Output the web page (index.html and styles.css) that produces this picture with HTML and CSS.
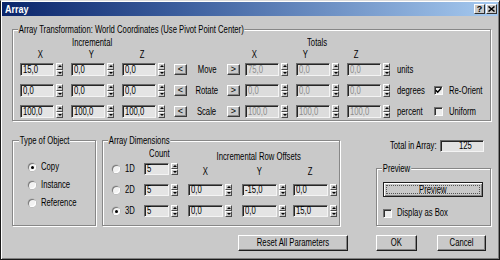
FILE: index.html
```html
<!DOCTYPE html>
<html>
<head>
<meta charset="utf-8">
<title>Array</title>
<link rel="stylesheet" href="styles.css">
</head>
<body>
<div class="window">
  <div class="titlebar">
    <span class="title"><span class="tx">Array</span></span>
    <div class="tbtns">
      <span class="tbtn">?</span>
      <span class="tbtn"><svg width="7" height="6" viewBox="0 0 7 6"><path d="M0.5 0.5 L6.5 5.5 M6.5 0.5 L0.5 5.5" stroke="#000" stroke-width="1.5" fill="none"/></svg></span>
    </div>
  </div>
  <div class="client">
    <div class="group g-transform">
      <span class="legend"><span class="tx">Array Transformation: World Coordinates (Use Pivot Point Center)</span></span>
      <div class="trow hdr1"><span class="inc"><span class="tx c">Incremental</span></span><span class="tot"><span class="tx c">Totals</span></span></div>
      <div class="trow hdr2"><span class="ax"><span class="tx c">X</span></span><span class="ax"><span class="tx c">Y</span></span><span class="ax"><span class="tx c">Z</span></span><span class="ax t1"><span class="tx c">X</span></span><span class="ax"><span class="tx c">Y</span></span><span class="ax"><span class="tx c">Z</span></span></div>

      <div class="trow data">
        <div class="spin"><span class="field"><span class="tx">15,0</span></span><span class="spinner"><i class="up"></i><i class="dn"></i></span></div>
        <div class="spin"><span class="field"><span class="tx">0,0</span></span><span class="spinner"><i class="up"></i><i class="dn"></i></span></div>
        <div class="spin lastinc"><span class="field"><span class="tx">0,0</span></span><span class="spinner"><i class="up"></i><i class="dn"></i></span></div>
        <span class="arr">&lt;</span><span class="op"><span class="tx c">Move</span></span><span class="arr r">&gt;</span>
        <div class="spin"><span class="field dis"><span class="tx">75,0</span></span><span class="spinner"><i class="up"></i><i class="dn"></i></span></div>
        <div class="spin"><span class="field dis"><span class="tx">0,0</span></span><span class="spinner"><i class="up"></i><i class="dn"></i></span></div>
        <div class="spin lasttot"><span class="field dis"><span class="tx">0,0</span></span><span class="spinner"><i class="up"></i><i class="dn"></i></span></div>
        <span class="unit"><span class="tx">units</span></span>
      </div>

      <div class="trow data">
        <div class="spin"><span class="field"><span class="tx">0,0</span></span><span class="spinner"><i class="up"></i><i class="dn"></i></span></div>
        <div class="spin"><span class="field"><span class="tx">0,0</span></span><span class="spinner"><i class="up"></i><i class="dn"></i></span></div>
        <div class="spin lastinc"><span class="field"><span class="tx">0,0</span></span><span class="spinner"><i class="up"></i><i class="dn"></i></span></div>
        <span class="arr">&lt;</span><span class="op"><span class="tx c">Rotate</span></span><span class="arr r">&gt;</span>
        <div class="spin"><span class="field dis"><span class="tx">0,0</span></span><span class="spinner"><i class="up"></i><i class="dn"></i></span></div>
        <div class="spin"><span class="field dis"><span class="tx">0,0</span></span><span class="spinner"><i class="up"></i><i class="dn"></i></span></div>
        <div class="spin lasttot"><span class="field dis"><span class="tx">0,0</span></span><span class="spinner"><i class="up"></i><i class="dn"></i></span></div>
        <span class="unit"><span class="tx">degrees</span></span>
        <span class="chk"><span class="cbox"><svg width="7" height="7" viewBox="0 0 7 7"><path d="M0.8 3.2 L2.7 5.2 L6.2 1.2" stroke="#000" stroke-width="1.5" fill="none"/></svg></span><span class="tx">Re-Orient</span></span>
      </div>

      <div class="trow data">
        <div class="spin"><span class="field"><span class="tx">100,0</span></span><span class="spinner"><i class="up"></i><i class="dn"></i></span></div>
        <div class="spin"><span class="field"><span class="tx">100,0</span></span><span class="spinner"><i class="up"></i><i class="dn"></i></span></div>
        <div class="spin lastinc"><span class="field"><span class="tx">100,0</span></span><span class="spinner"><i class="up"></i><i class="dn"></i></span></div>
        <span class="arr">&lt;</span><span class="op"><span class="tx c">Scale</span></span><span class="arr r">&gt;</span>
        <div class="spin"><span class="field dis"><span class="tx">100,0</span></span><span class="spinner"><i class="up"></i><i class="dn"></i></span></div>
        <div class="spin"><span class="field dis"><span class="tx">100,0</span></span><span class="spinner"><i class="up"></i><i class="dn"></i></span></div>
        <div class="spin lasttot"><span class="field dis"><span class="tx">100,0</span></span><span class="spinner"><i class="up"></i><i class="dn"></i></span></div>
        <span class="unit"><span class="tx">percent</span></span>
        <span class="chk"><span class="cbox"></span><span class="tx">Uniform</span></span>
      </div>
    </div>

    <div class="lower">
      <div class="group g-type">
        <span class="legend"><span class="tx">Type of Object</span></span>
        <div class="ropt"><span class="radio on"></span><span class="tx">Copy</span></div>
        <div class="ropt"><span class="radio"></span><span class="tx">Instance</span></div>
        <div class="ropt"><span class="radio"></span><span class="tx">Reference</span></div>
      </div>

      <div class="group g-dims">
        <span class="legend"><span class="tx">Array Dimensions</span></span>
        <div class="dhdr"><span class="count-h"><span class="tx c">Count</span></span><span class="iro"><span class="tx c">Incremental Row Offsets</span></span></div>
        <div class="drow">
          <span class="rl"><span class="radio"></span><span class="tx">1D</span></span>
          <div class="spin cnt"><span class="field"><span class="tx">5</span></span><span class="spinner"><i class="up"></i><i class="dn"></i></span></div>
          <span class="ax2 o1"><span class="tx c">X</span></span><span class="ax2 o2"><span class="tx c">Y</span></span><span class="ax2"><span class="tx c">Z</span></span>
        </div>
        <div class="drow">
          <span class="rl"><span class="radio"></span><span class="tx">2D</span></span>
          <div class="spin cnt"><span class="field"><span class="tx">5</span></span><span class="spinner"><i class="up"></i><i class="dn"></i></span></div>
          <div class="spin off o1"><span class="field"><span class="tx">0,0</span></span><span class="spinner"><i class="up"></i><i class="dn"></i></span></div>
          <div class="spin off o2"><span class="field"><span class="tx">-15,0</span></span><span class="spinner"><i class="up"></i><i class="dn"></i></span></div>
          <div class="spin off"><span class="field"><span class="tx">0,0</span></span><span class="spinner"><i class="up"></i><i class="dn"></i></span></div>
        </div>
        <div class="drow">
          <span class="rl"><span class="radio on"></span><span class="tx">3D</span></span>
          <div class="spin cnt"><span class="field"><span class="tx">5</span></span><span class="spinner"><i class="up"></i><i class="dn"></i></span></div>
          <div class="spin off o1"><span class="field"><span class="tx">0,0</span></span><span class="spinner"><i class="up"></i><i class="dn"></i></span></div>
          <div class="spin off o2"><span class="field"><span class="tx">0,0</span></span><span class="spinner"><i class="up"></i><i class="dn"></i></span></div>
          <div class="spin off"><span class="field"><span class="tx">15,0</span></span><span class="spinner"><i class="up"></i><i class="dn"></i></span></div>
        </div>
      </div>

      <div class="rightcol">
        <div class="total"><span class="tx r">Total in Array:</span><span class="field totf"><span class="tx c">125</span></span></div>
        <div class="group g-preview">
          <span class="legend"><span class="tx">Preview</span></span>
          <div class="btn focus"><span class="focusrect"><span class="tx c">Preview</span></span></div>
          <span class="chk dab"><span class="cbox"></span><span class="tx">Display as Box</span></span>
        </div>
      </div>
    </div>

    <div class="buttons">
      <div class="btn reset"><span class="tx c">Reset All Parameters</span></div>
      <div class="btn ok"><span class="tx c">OK</span></div>
      <div class="btn cancel"><span class="tx c">Cancel</span></div>
    </div>
  </div>
</div>
</body>
</html>
```
FILE: styles.css
```css
* { box-sizing: border-box; }
html, body { margin: 0; padding: 0; }
body {
  width: 500px;
  height: 260px;
  overflow: hidden;
  background: #c9c9c9;
  color: #000;
  font-family: "Liberation Sans", Arial, sans-serif;
  font-size: 10px;
  line-height: 12px;
}

/* the dialog font is narrow: compress each text run horizontally */
.tx {
  display: inline-block;
  white-space: nowrap;
  transform: scaleX(0.77);
  transform-origin: left center;
}
.tx.c { transform-origin: center center; }
.tx.r { transform-origin: right center; }

.window {
  width: 500px;
  height: 260px;
  display: flex;
  flex-direction: column;
  border: 1px solid;
  border-color: #dcdcdc #1a1a1a #1a1a1a #1a1a1a;
  box-shadow: inset 1px 1px 0 #fff, inset -1px -1px 0 #808080;
  padding: 1px 1px 2px 1px;
}

/* title bar */
.titlebar {
  height: 14px;
  display: flex;
  align-items: center;
  justify-content: space-between;
  padding: 0 1px 0 3px;
  background: linear-gradient(90deg, #0a246a 0%, #3a5c9c 35%, #a6caf0 100%);
}
.title {
  color: #fff;
  font-weight: bold;
  font-size: 11px;
  line-height: 14px;
}
.title .tx { transform: scaleX(0.82); }
.tbtns { display: flex; gap: 1px; }
.tbtn {
  width: 11px;
  height: 10px;
  display: flex;
  align-items: center;
  justify-content: center;
  background: #c9c9c9;
  border: 1px solid;
  border-color: #fff #303030 #303030 #fff;
  font-weight: bold;
  font-size: 9px;
  line-height: 8px;
}

.client {
  flex: 1;
  padding-left: 10px;
}

/* group boxes */
.group {
  position: relative;
  border: 1px solid #878787;
  box-shadow: 1px 1px 0 #fff, inset 1px 1px 0 #fff;
}
.legend {
  position: absolute;
  top: -6px;
  left: 5px;
  line-height: 11px;
  white-space: nowrap;
}
.legend .tx {
  background: #c9c9c9;
  padding: 0 1px;
}

.g-transform {
  margin-top: 13px;
  width: 479px;
  height: 92px;
  padding: 6px 0 2px 7px;
}
.trow { display: flex; align-items: center; white-space: nowrap; }
.hdr1 { height: 13px; }
.hdr1 .inc { width: 145px; text-align: center; }
.hdr1 .tot { width: 145px; margin-left: 80px; text-align: center; }
.hdr2 { height: 14px; align-items: flex-start; }
.hdr2 .ax { width: 40px; margin-right: 11px; text-align: center; line-height: 12px; }
.hdr2 .ax.t1 { margin-left: 61px; }

.data { height: 13px; }
.data + .data { margin-top: 8px; }
.data .spin { margin-right: 8px; }
.data .spin.lastinc { margin-right: 9px; }
.data .spin.lasttot { margin-right: 7px; }

.spin { display: flex; gap: 2px; flex: none; }
.field {
  display: block;
  width: 34px;
  height: 13px;
  padding-left: 2px;
  background: #e4e4e4;
  border: 1px solid;
  border-color: #6a6a6a #f4f4f4 #f4f4f4 #6a6a6a;
  box-shadow: inset 1px 1px 0 #262626;
  line-height: 11px;
  white-space: nowrap;
  overflow: hidden;
}
.field.dis { color: #8c8c8c; background: #dcdcdc; }

.spinner {
  width: 7px;
  height: 13px;
  display: flex;
  flex-direction: column;
  flex: none;
}
.spinner i {
  flex: 1;
  display: flex;
  align-items: center;
  justify-content: center;
  background: #c9c9c9;
  border: 1px solid;
  border-color: #fff #4a4a4a #4a4a4a #fff;
}
.spinner i::after {
  content: "";
  width: 0;
  height: 0;
  border-left: 2px solid transparent;
  border-right: 2px solid transparent;
}
.spinner i.up::after { border-bottom: 2px solid #000; }
.spinner i.dn::after { border-top: 2px solid #000; }

.arr {
  width: 13px;
  height: 11px;
  display: flex;
  align-items: center;
  justify-content: center;
  background: #c9c9c9;
  border: 1px solid;
  border-color: #fff #3a3a3a #3a3a3a #fff;
  box-shadow: inset -1px -1px 0 #8a8a8a;
  font-size: 9px;
  line-height: 9px;
  flex: none;
}
.arr.r { margin-right: 5px; }
.op { width: 40px; text-align: center; flex: none; }
.unit { width: 37px; flex: none; }

.chk { display: flex; align-items: center; gap: 6px; white-space: nowrap; }
.cbox {
  width: 9px;
  height: 9px;
  display: flex;
  align-items: center;
  justify-content: center;
  background: #ececec;
  border: 1px solid;
  border-color: #707070 #fafafa #fafafa #707070;
  box-shadow: inset 1px 1px 0 #303030;
  flex: none;
}

/* lower area */
.lower {
  display: flex;
  margin-top: 19px;
  height: 86px;
}
.g-type {
  width: 84px;
  margin-right: 6px;
  padding: 17px 0 0 15px;
}
.g-type .legend { left: 6px; }
.ropt {
  height: 18px;
  display: flex;
  align-items: center;
  gap: 5px;
  white-space: nowrap;
}
.radio {
  width: 8px;
  height: 8px;
  border-radius: 50%;
  background: #f2f2f2;
  box-shadow: inset 1px 1px 0 #7a7a7a, inset -1px -1px 0 #fff, 0 0 0 0.5px #b0b0b0;
  display: flex;
  align-items: center;
  justify-content: center;
  flex: none;
}
.radio.on::after {
  content: "";
  width: 3px;
  height: 3px;
  border-radius: 50%;
  background: #000;
}

.g-dims {
  width: 238px;
  margin-right: 36px;
  padding: 7px 1px 0 9px;
}
.dhdr { display: flex; height: 15px; white-space: nowrap; }
.count-h { width: 30px; margin-left: 32px; text-align: center; align-self: flex-start; }
.iro { width: 142px; margin-left: 14px; text-align: center; align-self: flex-end; }
.drow { display: flex; align-items: center; height: 12px; }
.drow + .drow { margin-top: 9px; }
.rl { width: 32px; display: flex; align-items: center; gap: 5px; flex: none; }
.drow .field { height: 12px; line-height: 10px; }
.drow .spinner { height: 12px; }
.spin.cnt { margin-right: 10px; }
.spin.cnt .field { width: 25px; }
.spin.off .field { width: 35px; }
.o1 { margin-right: 10px; }
.o2 { margin-right: 7px; }
.ax2 { width: 44px; padding-right: 9px; text-align: center; margin-top: 6px; flex: none; }

.rightcol { width: 115px; display: flex; flex-direction: column; }
.total {
  height: 12px;
  display: flex;
  justify-content: flex-end;
  align-items: center;
  gap: 3px;
  padding-right: 7px;
  white-space: nowrap;
}
.field.totf {
  width: 49px;
  height: 12px;
  text-align: center;
  padding-left: 8px;
  line-height: 10px;
  background: #e2e2e2;
}
.g-preview {
  margin-top: 16px;
  height: 58px;
  padding: 13px 0 0 6px;
}

.btn {
  display: flex;
  align-items: center;
  justify-content: center;
  background: #c9c9c9;
  border: 1px solid;
  border-color: #fff #1e1e1e #1e1e1e #fff;
  box-shadow: inset -1px -1px 0 #858585;
  white-space: nowrap;
}
.btn.focus {
  width: 100px;
  height: 15px;
  border-color: #1e1e1e;
  box-shadow: inset 1px 1px 0 #fff, inset -1px -1px 0 #858585;
  padding: 2px;
}
.focusrect {
  width: 100%;
  height: 100%;
  display: flex;
  align-items: center;
  justify-content: center;
  border: 1px dotted #555;
}
.chk.dab { margin-top: 10px; height: 12px; gap: 5px; }

.buttons {
  display: flex;
  margin-top: 9px;
  height: 16px;
}
.btn.reset { width: 110px; margin-left: 226px; }
.btn.ok { width: 41px; margin-left: 28px; }
.btn.cancel { width: 49px; margin-left: 20px; }
```
